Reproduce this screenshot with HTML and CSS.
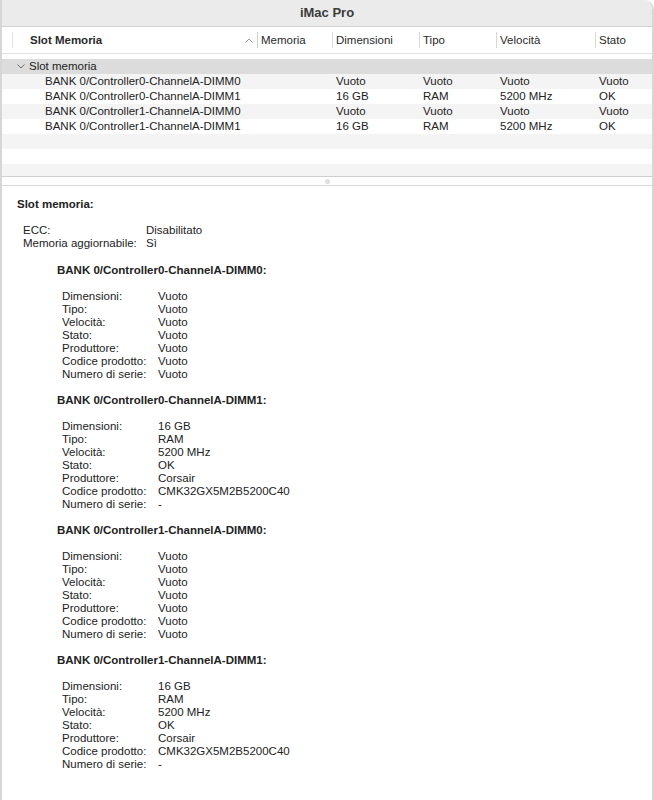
FILE: index.html
```html
<!DOCTYPE html>
<html lang="it">
<head>
    <meta charset="UTF-8">
    <title>iMac Pro</title>
    <link rel="stylesheet" href="styles.css">
</head>
<body>
    <div class="window">
        <div class="titlebar">iMac Pro</div>

        <div class="table">
            <div class="thead grid">
                <div class="th th-name">
                    <span>Slot Memoria</span>
                    <svg class="caret" width="8" height="5" viewBox="0 0 8 5"><path d="M0.5 4.5 L4 1 L7.5 4.5" fill="none" stroke="#9a9a9a" stroke-width="1"/></svg>
                </div>
                <div class="th">Memoria</div>
                <div class="th">Dimensioni</div>
                <div class="th">Tipo</div>
                <div class="th">Velocità</div>
                <div class="th">Stato</div>
            </div>

            <div class="tbody">
                <div class="group-row">
                    <svg class="chevron" width="8" height="5" viewBox="0 0 8 5"><path d="M0.5 0.5 L4 4 L7.5 0.5" fill="none" stroke="#6e6e6e" stroke-width="1"/></svg>
                    Slot memoria
                </div>
                <div class="tr grid">
                    <div class="td td-name">BANK 0/Controller0-ChannelA-DIMM0</div>
                    <div class="td"></div>
                    <div class="td">Vuoto</div>
                    <div class="td">Vuoto</div>
                    <div class="td">Vuoto</div>
                    <div class="td">Vuoto</div>
                </div>
                <div class="tr grid">
                    <div class="td td-name">BANK 0/Controller0-ChannelA-DIMM1</div>
                    <div class="td"></div>
                    <div class="td">16 GB</div>
                    <div class="td">RAM</div>
                    <div class="td">5200 MHz</div>
                    <div class="td">OK</div>
                </div>
                <div class="tr grid">
                    <div class="td td-name">BANK 0/Controller1-ChannelA-DIMM0</div>
                    <div class="td"></div>
                    <div class="td">Vuoto</div>
                    <div class="td">Vuoto</div>
                    <div class="td">Vuoto</div>
                    <div class="td">Vuoto</div>
                </div>
                <div class="tr grid">
                    <div class="td td-name">BANK 0/Controller1-ChannelA-DIMM1</div>
                    <div class="td"></div>
                    <div class="td">16 GB</div>
                    <div class="td">RAM</div>
                    <div class="td">5200 MHz</div>
                    <div class="td">OK</div>
                </div>
                <div class="tr"></div>
                <div class="tr"></div>
                <div class="tr tr-cut"></div>
            </div>
        </div>

        <div class="splitter"><span class="dot"></span></div>

        <div class="details">
            <div class="heading">Slot memoria:</div>
            <dl class="props props-top">
                <dt>ECC:</dt><dd>Disabilitato</dd>
                <dt>Memoria aggiornabile:</dt><dd>Sì</dd>
            </dl>

            <section class="slot">
                <div class="heading">BANK 0/Controller0-ChannelA-DIMM0:</div>
                <dl class="props">
                    <dt>Dimensioni:</dt><dd>Vuoto</dd>
                    <dt>Tipo:</dt><dd>Vuoto</dd>
                    <dt>Velocità:</dt><dd>Vuoto</dd>
                    <dt>Stato:</dt><dd>Vuoto</dd>
                    <dt>Produttore:</dt><dd>Vuoto</dd>
                    <dt>Codice prodotto:</dt><dd>Vuoto</dd>
                    <dt>Numero di serie:</dt><dd>Vuoto</dd>
                </dl>
            </section>

            <section class="slot">
                <div class="heading">BANK 0/Controller0-ChannelA-DIMM1:</div>
                <dl class="props">
                    <dt>Dimensioni:</dt><dd>16 GB</dd>
                    <dt>Tipo:</dt><dd>RAM</dd>
                    <dt>Velocità:</dt><dd>5200 MHz</dd>
                    <dt>Stato:</dt><dd>OK</dd>
                    <dt>Produttore:</dt><dd>Corsair</dd>
                    <dt>Codice prodotto:</dt><dd>CMK32GX5M2B5200C40</dd>
                    <dt>Numero di serie:</dt><dd>-</dd>
                </dl>
            </section>

            <section class="slot">
                <div class="heading">BANK 0/Controller1-ChannelA-DIMM0:</div>
                <dl class="props">
                    <dt>Dimensioni:</dt><dd>Vuoto</dd>
                    <dt>Tipo:</dt><dd>Vuoto</dd>
                    <dt>Velocità:</dt><dd>Vuoto</dd>
                    <dt>Stato:</dt><dd>Vuoto</dd>
                    <dt>Produttore:</dt><dd>Vuoto</dd>
                    <dt>Codice prodotto:</dt><dd>Vuoto</dd>
                    <dt>Numero di serie:</dt><dd>Vuoto</dd>
                </dl>
            </section>

            <section class="slot">
                <div class="heading">BANK 0/Controller1-ChannelA-DIMM1:</div>
                <dl class="props">
                    <dt>Dimensioni:</dt><dd>16 GB</dd>
                    <dt>Tipo:</dt><dd>RAM</dd>
                    <dt>Velocità:</dt><dd>5200 MHz</dd>
                    <dt>Stato:</dt><dd>OK</dd>
                    <dt>Produttore:</dt><dd>Corsair</dd>
                    <dt>Codice prodotto:</dt><dd>CMK32GX5M2B5200C40</dd>
                    <dt>Numero di serie:</dt><dd>-</dd>
                </dl>
            </section>
        </div>
    </div>
</body>
</html>
```

FILE: styles.css
```css
body {
    margin: 0;
    font-family: "Liberation Sans", Arial, sans-serif;
    font-size: 11.5px;
    color: #222;
    background: #fff;
}
.window {
    height: 800px;
    border-left: 2px solid #d6d6d6;
    border-right: 2px solid #d6d6d6;
    border-top-right-radius: 10px;
    overflow: hidden;
    box-sizing: border-box;
}
.titlebar {
    height: 26px;
    line-height: 26px;
    text-align: center;
    font-size: 13px;
    font-weight: bold;
    color: #3a3a3a;
    background: #ebebeb;
    border-bottom: 1px solid #d2d2d2;
}
.grid {
    display: grid;
    grid-template-columns: 255px 75px 87px 77px 99px 1fr;
}
.thead {
    height: 26px;
    align-items: center;
    border-bottom: 1px solid #e2e2e2;
    margin-bottom: 5px;
}
.th {
    height: 16px;
    line-height: 16px;
    border-left: 1px solid #d9d9d9;
    padding-left: 3px;
    color: #2a2a2a;
}
.th-name {
    margin-left: 10px;
    padding-left: 17px;
    padding-right: 4px;
    border-left-color: #e4e4e4;
    font-weight: bold;
    display: flex;
    justify-content: space-between;
    align-items: center;
}
.th-name + .th {
    border-left-color: #d0d0d0;
}
.caret {
    display: block;
}
.group-row {
    height: 15px;
    line-height: 15px;
    background: #dcdcdc;
    padding-left: 15px;
    display: flex;
    align-items: center;
    gap: 4px;
}
.chevron {
    display: block;
}
.tr {
    height: 15px;
    line-height: 15px;
}
.tr:nth-child(even) {
    background: #f4f4f4;
}
.tr-cut {
    height: 12px;
}
.td {
    padding-left: 4px;
    white-space: nowrap;
}
.td-name {
    padding-left: 43px;
}
.splitter {
    height: 8px;
    border-top: 1px solid #cfcfcf;
    border-bottom: 1px solid #d6d6d6;
    display: flex;
    justify-content: center;
    align-items: center;
}
.dot {
    width: 5px;
    height: 5px;
    border-radius: 50%;
    background: #dedede;
}
.details {
    padding: 12px 0 0 15px;
    line-height: 13px;
}
.heading {
    font-weight: bold;
    margin-bottom: 13px;
}
.props {
    display: grid;
    grid-template-columns: 96px auto;
    margin: 0 0 13px 5px;
}
.props dt, .props dd {
    margin: 0;
}
.props-top {
    grid-template-columns: 123px auto;
    margin-left: 6px;
    margin-bottom: 14px;
}
.slot {
    margin-left: 40px;
}
```
